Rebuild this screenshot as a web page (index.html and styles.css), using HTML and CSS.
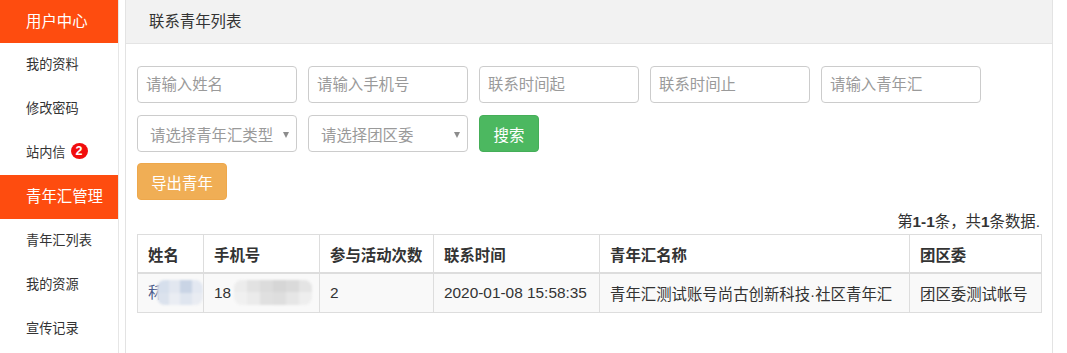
FILE: index.html
```html
<!DOCTYPE html>
<html lang="zh-CN">
<head>
<meta charset="utf-8">
<title>联系青年列表</title>
<link rel="stylesheet" href="styles.css">
</head>
<body>
<div class="layout">
  <aside class="sidebar">
    <div class="nav-head nav-head-first">用户中心</div>
    <a class="nav-item">我的资料</a>
    <a class="nav-item">修改密码</a>
    <a class="nav-item">站内信<span class="badge">2</span></a>
    <div class="nav-head">青年汇管理</div>
    <a class="nav-item">青年汇列表</a>
    <a class="nav-item">我的资源</a>
    <a class="nav-item">宣传记录</a>
  </aside>
  <main class="panel">
    <div class="panel-head">联系青年列表</div>
    <div class="panel-body">
      <div class="form-row row-1">
        <input class="field" placeholder="请输入姓名">
        <input class="field" placeholder="请输入手机号">
        <input class="field" placeholder="联系时间起">
        <input class="field" placeholder="联系时间止">
        <input class="field" placeholder="请输入青年汇">
      </div>
      <div class="form-row row-2">
        <div class="field select">请选择青年汇类型</div>
        <div class="field select">请选择团区委</div>
        <button class="btn btn-search">搜索</button>
      </div>
      <div class="form-row">
        <button class="btn btn-export">导出青年</button>
      </div>
      <div class="summary">第<b>1-1</b>条，共<b>1</b>条数据.</div>
      <table class="grid">
        <colgroup>
          <col class="c1"><col class="c2"><col class="c3"><col class="c4"><col class="c5"><col class="c6">
        </colgroup>
        <thead>
          <tr><th>姓名</th><th>手机号</th><th>参与活动次数</th><th>联系时间</th><th>青年汇名称</th><th>团区委</th></tr>
        </thead>
        <tbody>
          <tr>
            <td><span class="name-char">秝</span><span class="mosaic mosaic-blue"><i></i><i></i><i></i><i></i><i></i><i></i><i></i><i></i></span></td>
            <td>18<span class="mosaic mosaic-gray"><i></i><i></i><i></i><i></i><i></i><i></i><i></i><i></i><i></i><i></i><i></i><i></i></span></td>
            <td>2</td>
            <td>2020-01-08 15:58:35</td>
            <td>青年汇测试账号尚古创新科技·社区青年汇</td>
            <td>团区委测试帐号</td>
          </tr>
        </tbody>
      </table>
    </div>
  </main>
</div>
</body>
</html>
```

FILE: styles.css
```css
html, body {
  margin: 0;
  padding: 0;
  background: #fff;
}
body {
  font-family: "Liberation Sans", "Noto Sans CJK SC", sans-serif;
  color: #333;
  height: 353px;
  overflow: hidden;
}
.layout {
  display: flex;
  align-items: stretch;
  height: 353px;
}
.sidebar {
  width: 118px;
  border-right: 1px solid #e6e6e6;
  display: flex;
  flex-direction: column;
  flex: none;
}
.nav-head {
  height: 44px;
  line-height: 44px;
  background: #fe4c0f;
  color: #fff;
  font-size: 15.4px;
  padding-left: 26px;
}
.nav-head-first {
  height: 43px;
  line-height: 43px;
}
.nav-item {
  box-sizing: border-box;
  display: flex;
  align-items: center;
  height: 44px;
  padding-left: 26px;
  padding-bottom: 4px;
  font-size: 13.2px;
  color: #333;
}
.badge {
  display: inline-flex;
  align-items: center;
  justify-content: center;
  width: 17px;
  height: 16px;
  margin-left: 5px;
  border-radius: 50%;
  background: #f10d0d;
  color: #fff;
  font-weight: bold;
  font-size: 12.5px;
  font-family: "Liberation Sans", sans-serif;
}
.panel {
  margin-left: 6px;
  width: 926px;
  border-left: 1px solid #e3e3e3;
  border-right: 1px solid #e3e3e3;
  flex: none;
}
.panel-head {
  height: 43px;
  line-height: 43px;
  background: #f2f2f2;
  border-bottom: 1px solid #e4e4e4;
  padding-left: 23px;
  font-size: 15.4px;
  color: #333;
}
.panel-body {
  padding: 22px 11px 0 11px;
}
.form-row {
  display: flex;
  gap: 11.5px;
}
.row-1 {
  margin-bottom: 12px;
}
.row-2 {
  margin-bottom: 11px;
}
.field {
  box-sizing: border-box;
  width: 159.5px;
  height: 37px;
  border: 1px solid #cccccc;
  border-radius: 4px;
  padding: 0 8px;
  font-family: inherit;
  font-size: 15.4px;
  color: #555;
  background: #fff;
  outline: none;
}
.field::placeholder {
  color: #9a9a9a;
}
.select {
  position: relative;
  display: flex;
  align-items: center;
  padding-left: 12px;
  color: #9a9a9a;
}
.select::after {
  content: "";
  position: absolute;
  right: 7px;
  top: 16px;
  border-left: 3.5px solid transparent;
  border-right: 3.5px solid transparent;
  border-top: 6px solid #8c8c8c;
}
.btn {
  box-sizing: border-box;
  height: 37px;
  border: 1px solid transparent;
  border-radius: 4px;
  color: #fff;
  font-family: inherit;
  font-size: 15.4px;
  padding: 0 13px;
  cursor: pointer;
}
.btn-search {
  width: 60px;
  background: #4cb860;
  border-color: #45ae58;
}
.btn-export {
  width: 90px;
  background: #f0ae55;
  border-color: #eea84c;
}
.summary {
  margin-top: 11px;
  line-height: 22px;
  margin-bottom: 1px;
  text-align: right;
  font-size: 15.4px;
  color: #333;
  padding-right: 1px;
}
.summary b {
  font-weight: bold;
}
.grid {
  width: 904px;
  border-collapse: collapse;
  table-layout: fixed;
  font-size: 15.4px;
}
.c1 { width: 66px; }
.c2 { width: 116px; }
.c3 { width: 114px; }
.c4 { width: 166px; }
.c5 { width: 310px; }
.c6 { width: 132px; }
.grid th, .grid td {
  border: 1px solid #dddddd;
  padding: 0 10px;
  text-align: left;
  white-space: nowrap;
  overflow: hidden;
}
.grid th {
  height: 37px;
  font-weight: bold;
  border-bottom: 2px solid #dddddd;
}
.grid td {
  height: 38px;
  background: #f9f9f9;
}
.name-char {
  color: #4b5c8c;
}
.mosaic {
  display: inline-grid;
  vertical-align: middle;
  height: 25px;
  overflow: hidden;
  border-radius: 8px;
  filter: blur(0.8px);
  position: relative;
  top: -1px;
}
.mosaic i {
  display: block;
}
.mosaic-blue {
  width: 46px;
  margin-left: -6px;
  grid-template-columns: repeat(4, 1fr);
  grid-template-rows: repeat(2, 1fr);
}
.mosaic-blue i:nth-child(1) { background: #d6dfec; }
.mosaic-blue i:nth-child(2) { background: #e2e7f0; }
.mosaic-blue i:nth-child(3) { background: #c9d4e5; }
.mosaic-blue i:nth-child(4) { background: #e3e8f1; }
.mosaic-blue i:nth-child(5) { background: #dbe2ed; }
.mosaic-blue i:nth-child(6) { background: #eaedf3; }
.mosaic-blue i:nth-child(7) { background: #dfe5ef; }
.mosaic-blue i:nth-child(8) { background: #e9ecf2; }
.mosaic-gray {
  width: 78px;
  margin-left: 3px;
  grid-template-columns: repeat(6, 1fr);
  grid-template-rows: repeat(2, 1fr);
}
.mosaic-gray i:nth-child(1) { background: #ececec; }
.mosaic-gray i:nth-child(2) { background: #e2e2e2; }
.mosaic-gray i:nth-child(3) { background: #dcdcdc; }
.mosaic-gray i:nth-child(4) { background: #d6d6d6; }
.mosaic-gray i:nth-child(5) { background: #dadada; }
.mosaic-gray i:nth-child(6) { background: #e4e4e4; }
.mosaic-gray i:nth-child(7) { background: #f0f0f0; }
.mosaic-gray i:nth-child(8) { background: #ebebeb; }
.mosaic-gray i:nth-child(9) { background: #e0e0e0; }
.mosaic-gray i:nth-child(10) { background: #dedede; }
.mosaic-gray i:nth-child(11) { background: #e6e6e6; }
.mosaic-gray i:nth-child(12) { background: #eeeeee; }
```
